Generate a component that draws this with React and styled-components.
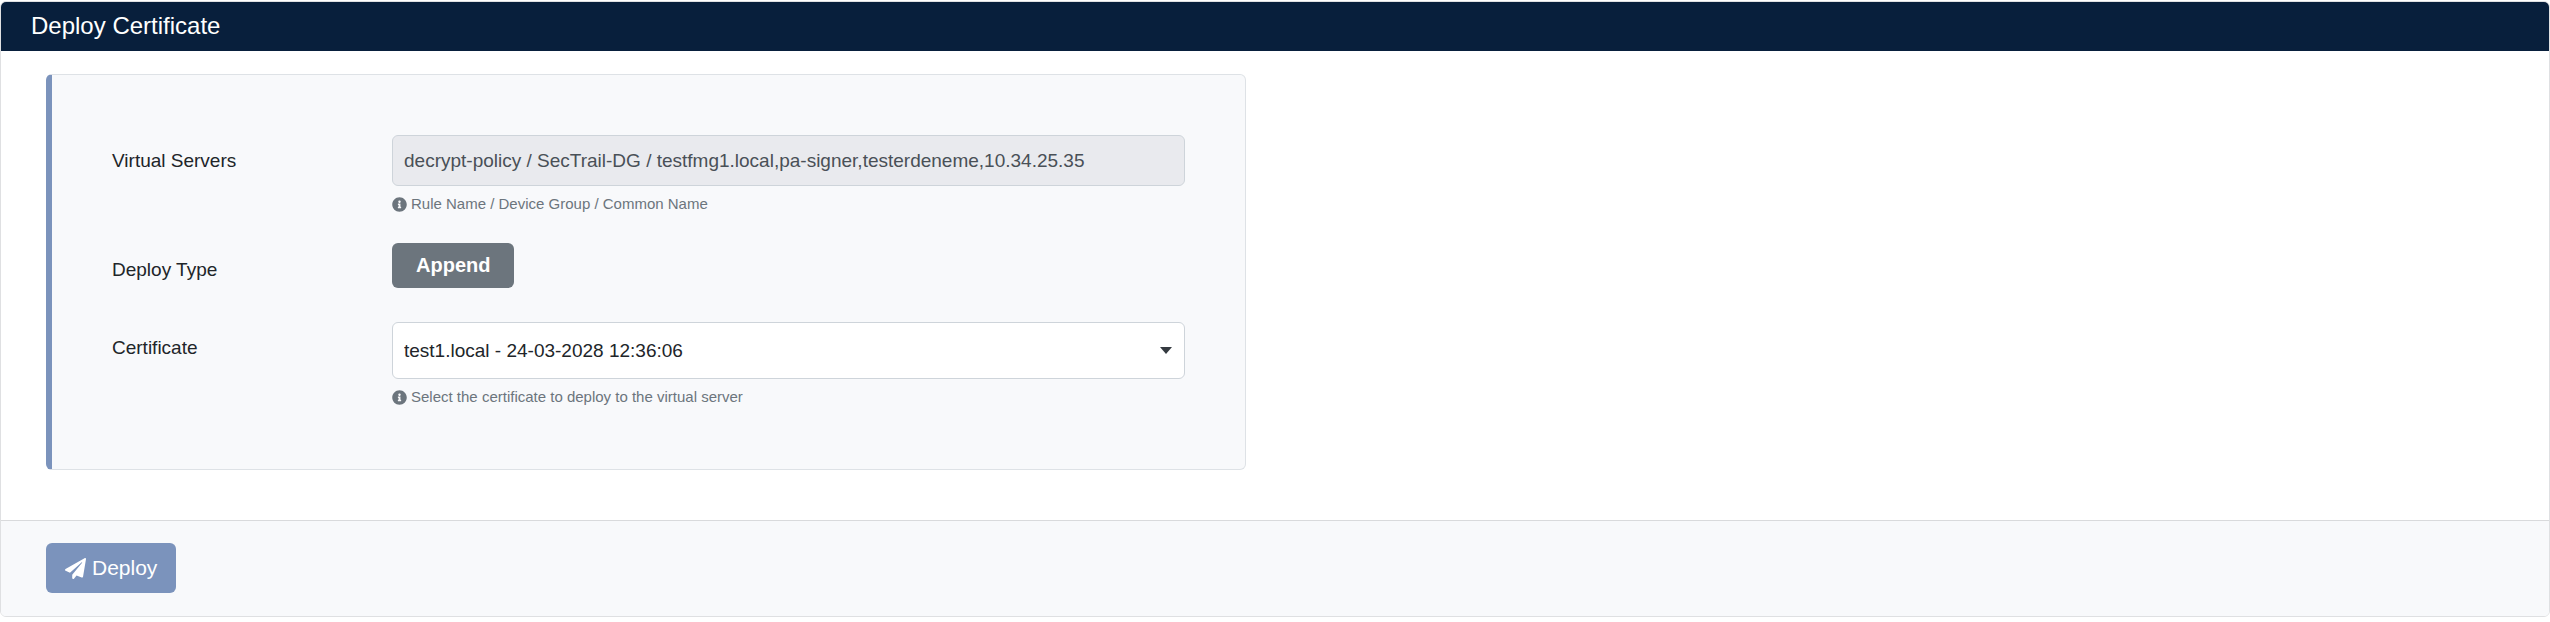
import React, { useState } from 'react';
import styled, { createGlobalStyle } from 'styled-components';
import { FaInfoCircle, FaPaperPlane } from 'react-icons/fa';

const GlobalStyle = createGlobalStyle`
  * {
    box-sizing: border-box;
  }
  body {
    margin: 0;
    background: #fff;
    color: #212529;
    font-family: 'Liberation Sans', Arial, sans-serif;
    font-size: 19px;
    line-height: 28px;
  }
  button, input, select {
    font-family: inherit;
  }
`;

const Card = styled.main`
  margin-top: 1px;
  border: 1px solid #dfe0e2;
  border-radius: 6px;
  background: #fff;
  overflow: hidden;
`;

const CardHeader = styled.header`
  padding: 10px 30px 11px;
  background: #081f3c;
`;

const Title = styled.h1`
  margin: 0;
  color: #fff;
  font-size: 24px;
  font-weight: 400;
  line-height: 28px;
`;

const CardBody = styled.div`
  padding: 23px 45px 50px;
`;

const Callout = styled.section`
  display: flex;
  flex-direction: column;
  gap: 24px;
  max-width: 1200px;
  padding: 60px 60px 61px;
  border: 1px solid #dee2e6;
  border-left: 6px solid #7b93bc;
  border-radius: 6px;
  background: #f8f9fb;
`;

const FormRow = styled.div`
  display: flex;
  align-items: flex-start;
`;

const Label = styled.label`
  flex: 0 0 280px;
  padding-top: ${props => props.$top || 12}px;
`;

const Control = styled.div`
  flex: 1;
  min-width: 0;
`;

const TextInput = styled.input`
  display: block;
  width: 100%;
  height: 51px;
  padding: 0 11px;
  border: 1px solid #ced4da;
  border-radius: 6px;
  background: #e9eaee;
  color: #495057;
  font-size: 19px;
  opacity: 1;
`;

const SelectWrap = styled.div`
  position: relative;
`;

const Select = styled.select`
  display: block;
  width: 100%;
  height: 57px;
  padding: 0 40px 0 11px;
  border: 1px solid #ced4da;
  border-radius: 6px;
  appearance: none;
  background: #fff;
  color: #212529;
  font-size: 19px;
`;

const Caret = styled.svg`
  position: absolute;
  top: 25px;
  right: 13px;
  width: 12px;
  height: 7px;
  fill: #343a40;
  pointer-events: none;
`;

const Help = styled.small`
  display: flex;
  align-items: center;
  gap: 4px;
  margin-top: 7px;
  color: #6c757d;
  font-size: 15px;
  line-height: 22px;
`;

const TypeButton = styled.button`
  display: block;
  height: 45px;
  margin: 4px 0 10px;
  padding: 0 24px;
  border: 0;
  border-radius: 6px;
  background: #6c757d;
  color: #fff;
  font-size: 20px;
  font-weight: 700;
`;

const CardFooter = styled.footer`
  padding: 22px 45px 23px;
  border-top: 1px solid #d9dadc;
  background: #f8f9fb;
`;

const DeployButton = styled.button`
  display: flex;
  align-items: center;
  gap: 6px;
  height: 50px;
  padding: 0 19px;
  border: 0;
  border-radius: 6px;
  background: #7b93bc;
  color: #fff;
  font-size: 21px;
`;

const HelpText = ({ id, children }) => (
  <Help id={id}>
    <FaInfoCircle size={15} aria-hidden="true" />
    <span>{children}</span>
  </Help>
);

const App = () => {
  const certificates = ['test1.local - 24-03-2028 12:36:06'];
  const [certificate, setCertificate] = useState(certificates[0]);

  return (
    <>
      <GlobalStyle />
      <Card>
        <CardHeader>
          <Title>Deploy Certificate</Title>
        </CardHeader>
        <CardBody>
          <Callout>
            <FormRow>
              <Label htmlFor="servers">Virtual Servers</Label>
              <Control>
                <TextInput
                  id="servers"
                  type="text"
                  disabled
                  aria-describedby="servers-help"
                  value="decrypt-policy / SecTrail-DG / testfmg1.local,pa-signer,testerdeneme,10.34.25.35"
                />
                <HelpText id="servers-help">
                  Rule Name / Device Group / Common Name
                </HelpText>
              </Control>
            </FormRow>
            <FormRow>
              <Label htmlFor="deploy-type" $top={17}>
                Deploy Type
              </Label>
              <Control>
                <TypeButton id="deploy-type" type="button">
                  Append
                </TypeButton>
              </Control>
            </FormRow>
            <FormRow>
              <Label htmlFor="certificate">Certificate</Label>
              <Control>
                <SelectWrap>
                  <Select
                    id="certificate"
                    aria-describedby="certificate-help"
                    value={certificate}
                    onChange={e => setCertificate(e.target.value)}
                  >
                    {certificates.map(c => (
                      <option key={c}>{c}</option>
                    ))}
                  </Select>
                  <Caret viewBox="0 0 12 7" aria-hidden="true">
                    <path d="M0 0h12L6 7z" />
                  </Caret>
                </SelectWrap>
                <HelpText id="certificate-help">
                  Select the certificate to deploy to the virtual server
                </HelpText>
              </Control>
            </FormRow>
          </Callout>
        </CardBody>
        <CardFooter>
          <DeployButton type="button">
            <FaPaperPlane size={21} aria-hidden="true" />
            Deploy
          </DeployButton>
        </CardFooter>
      </Card>
    </>
  );
};

export default App;
